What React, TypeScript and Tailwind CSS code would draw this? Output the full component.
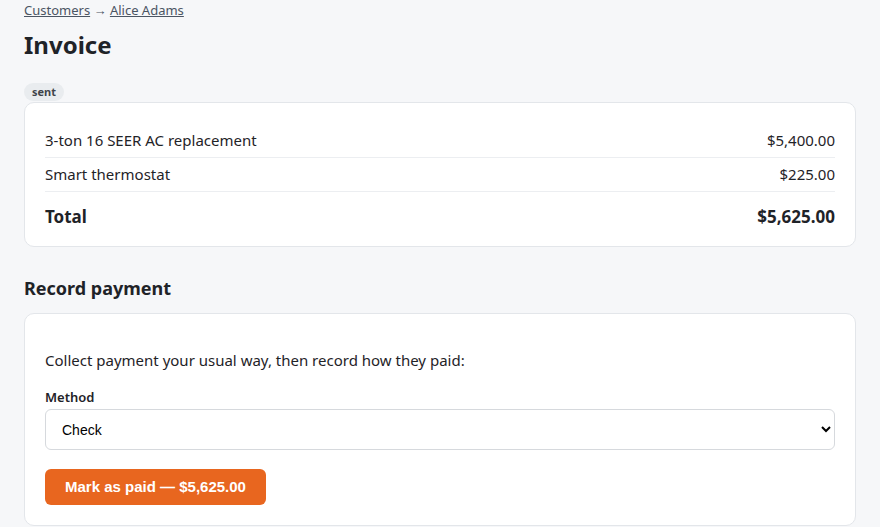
import React from "react";

const items = [
  { label: "3-ton 16 SEER AC replacement", amount: "$5,400.00" },
  { label: "Smart thermostat", amount: "$225.00" },
];

export default function App() {
  return (
    <div
      className="min-h-[527px] bg-[#f6f7f9] px-6 text-[#1f2328]"
      style={{ fontFamily: '"Noto Sans", "Open Sans", sans-serif' }}
    >
      <div className="pt-[1px] text-[13px] leading-[18px] text-[#4b5563]">
        <a href="#" className="underline">Customers</a>
        {" → "}
        <a href="#" className="underline">Alice Adams</a>
      </div>

      <h1 className="mt-[14px] text-[24px] font-bold leading-[24px]">Invoice</h1>

      <div className="mt-[26px] flex">
        <span className="rounded-full bg-[#e9ecef] px-2 text-[11px] font-bold leading-[18px] text-[#3f444a]">
          sent
        </span>
      </div>

      <div className="mt-[1px] rounded-[10px] border border-[#e3e6ea] bg-white px-5 pt-[21px] pb-[4px]">
        {items.map((item) => (
          <div
            key={item.label}
            className="flex h-[34px] items-center justify-between border-b border-[#eceef1] text-[15px]"
          >
            <span>{item.label}</span>
            <span>{item.amount}</span>
          </div>
        ))}
        <div className="flex h-[50px] items-center justify-between text-[17px] font-bold">
          <span>Total</span>
          <span>$5,625.00</span>
        </div>
      </div>

      <h2 className="mt-[29px] text-[18px] font-bold leading-[24px]">Record payment</h2>

      <div className="mt-[13px] rounded-[10px] border border-[#e3e6ea] bg-white px-5 pt-[35px] pb-5">
        <p className="text-[15px] leading-[22px]">
          Collect payment your usual way, then record how they paid:
        </p>
        <label className="mt-[18px] block text-[13px] font-semibold leading-[16px]">Method</label>
        <select
          className="mt-[4px] block h-[41px] w-full rounded-[6px] border border-[#d6d9dd] bg-white px-[12px] text-[14px] text-black"
          style={{ fontFamily: '"Liberation Sans", Arial, sans-serif' }}
          defaultValue="check"
        >
          <option value="check">Check</option>
          <option value="cash">Cash</option>
          <option value="card">Card</option>
        </select>
        <button
          type="button"
          className="mt-[19px] h-[36px] rounded-[6px] bg-[#e8661f] px-5 text-[15px] font-bold text-white"
          style={{ fontFamily: '"Liberation Sans", Arial, sans-serif' }}
        >
          Mark as paid — $5,625.00
        </button>
      </div>
    </div>
  );
}
